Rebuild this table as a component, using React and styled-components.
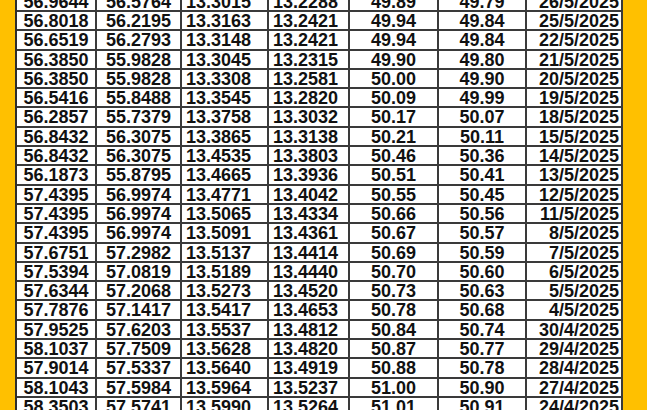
import React from "react";
import styled, { createGlobalStyle } from "styled-components";

const GlobalStyle = createGlobalStyle`
  html, body {
    margin: 0;
    padding: 0;
    background: #ffc000;
  }
  body {
    font-family: "Liberation Sans", Arial, sans-serif;
  }
`;

const Page = styled.div`
  width: 647px;
  height: 410px;
  overflow: hidden;
  background: #ffc000;
  padding-left: 15px;
  box-sizing: border-box;
`;

const Sheet = styled.div`
  width: 608px;
  margin-top: -7.3px;
  background: #fff;
  border-left: 2px solid #2e2e2e;
  box-sizing: border-box;
`;

const Row = styled.div`
  display: grid;
  grid-template-columns: 80px 85px 87px 81px 89px 88px 96px;
  height: 19.3px;
  border-bottom: 2px solid #3a3a3a;
  box-sizing: border-box;
`;

const Cell = styled.div`
  text-align: ${(p) => p.$align};
  padding: 2px ${(p) => (p.$align === "right" ? "2px" : "0")} 0
    ${(p) => (p.$align === "left" ? "4px" : "0")};
  border-right: 2px solid #3a3a3a;
  box-sizing: border-box;
  font-size: 18px;
  line-height: 15px;
  font-weight: 700;
  color: #111;
  white-space: nowrap;
`;

const aligns = ["center", "center", "left", "left", "center", "center", "right"];

const rows = [
  ["56.9644", "56.5764", "13.3015", "13.2288", "49.89", "49.79", "26/5/2025"],
  ["56.8018", "56.2195", "13.3163", "13.2421", "49.94", "49.84", "25/5/2025"],
  ["56.6519", "56.2793", "13.3148", "13.2421", "49.94", "49.84", "22/5/2025"],
  ["56.3850", "55.9828", "13.3045", "13.2315", "49.90", "49.80", "21/5/2025"],
  ["56.3850", "55.9828", "13.3308", "13.2581", "50.00", "49.90", "20/5/2025"],
  ["56.5416", "55.8488", "13.3545", "13.2820", "50.09", "49.99", "19/5/2025"],
  ["56.2857", "55.7379", "13.3758", "13.3032", "50.17", "50.07", "18/5/2025"],
  ["56.8432", "56.3075", "13.3865", "13.3138", "50.21", "50.11", "15/5/2025"],
  ["56.8432", "56.3075", "13.4535", "13.3803", "50.46", "50.36", "14/5/2025"],
  ["56.1873", "55.8795", "13.4665", "13.3936", "50.51", "50.41", "13/5/2025"],
  ["57.4395", "56.9974", "13.4771", "13.4042", "50.55", "50.45", "12/5/2025"],
  ["57.4395", "56.9974", "13.5065", "13.4334", "50.66", "50.56", "11/5/2025"],
  ["57.4395", "56.9974", "13.5091", "13.4361", "50.67", "50.57", "8/5/2025"],
  ["57.6751", "57.2982", "13.5137", "13.4414", "50.69", "50.59", "7/5/2025"],
  ["57.5394", "57.0819", "13.5189", "13.4440", "50.70", "50.60", "6/5/2025"],
  ["57.6344", "57.2068", "13.5273", "13.4520", "50.73", "50.63", "5/5/2025"],
  ["57.7876", "57.1417", "13.5417", "13.4653", "50.78", "50.68", "4/5/2025"],
  ["57.9525", "57.6203", "13.5537", "13.4812", "50.84", "50.74", "30/4/2025"],
  ["58.1037", "57.7509", "13.5628", "13.4820", "50.87", "50.77", "29/4/2025"],
  ["57.9014", "57.5337", "13.5640", "13.4919", "50.88", "50.78", "28/4/2025"],
  ["58.1043", "57.5984", "13.5964", "13.5237", "51.00", "50.90", "27/4/2025"],
  ["58.3503", "57.5741", "13.5990", "13.5264", "51.01", "50.91", "24/4/2025"],
];

export default function App() {
  return (
    <>
      <GlobalStyle />
      <Page>
        <Sheet>
          {rows.map((r, i) => (
            <Row key={i}>
              {r.map((v, j) => (
                <Cell key={j} $align={aligns[j]}>
                  {v}
                </Cell>
              ))}
            </Row>
          ))}
        </Sheet>
      </Page>
    </>
  );
}
